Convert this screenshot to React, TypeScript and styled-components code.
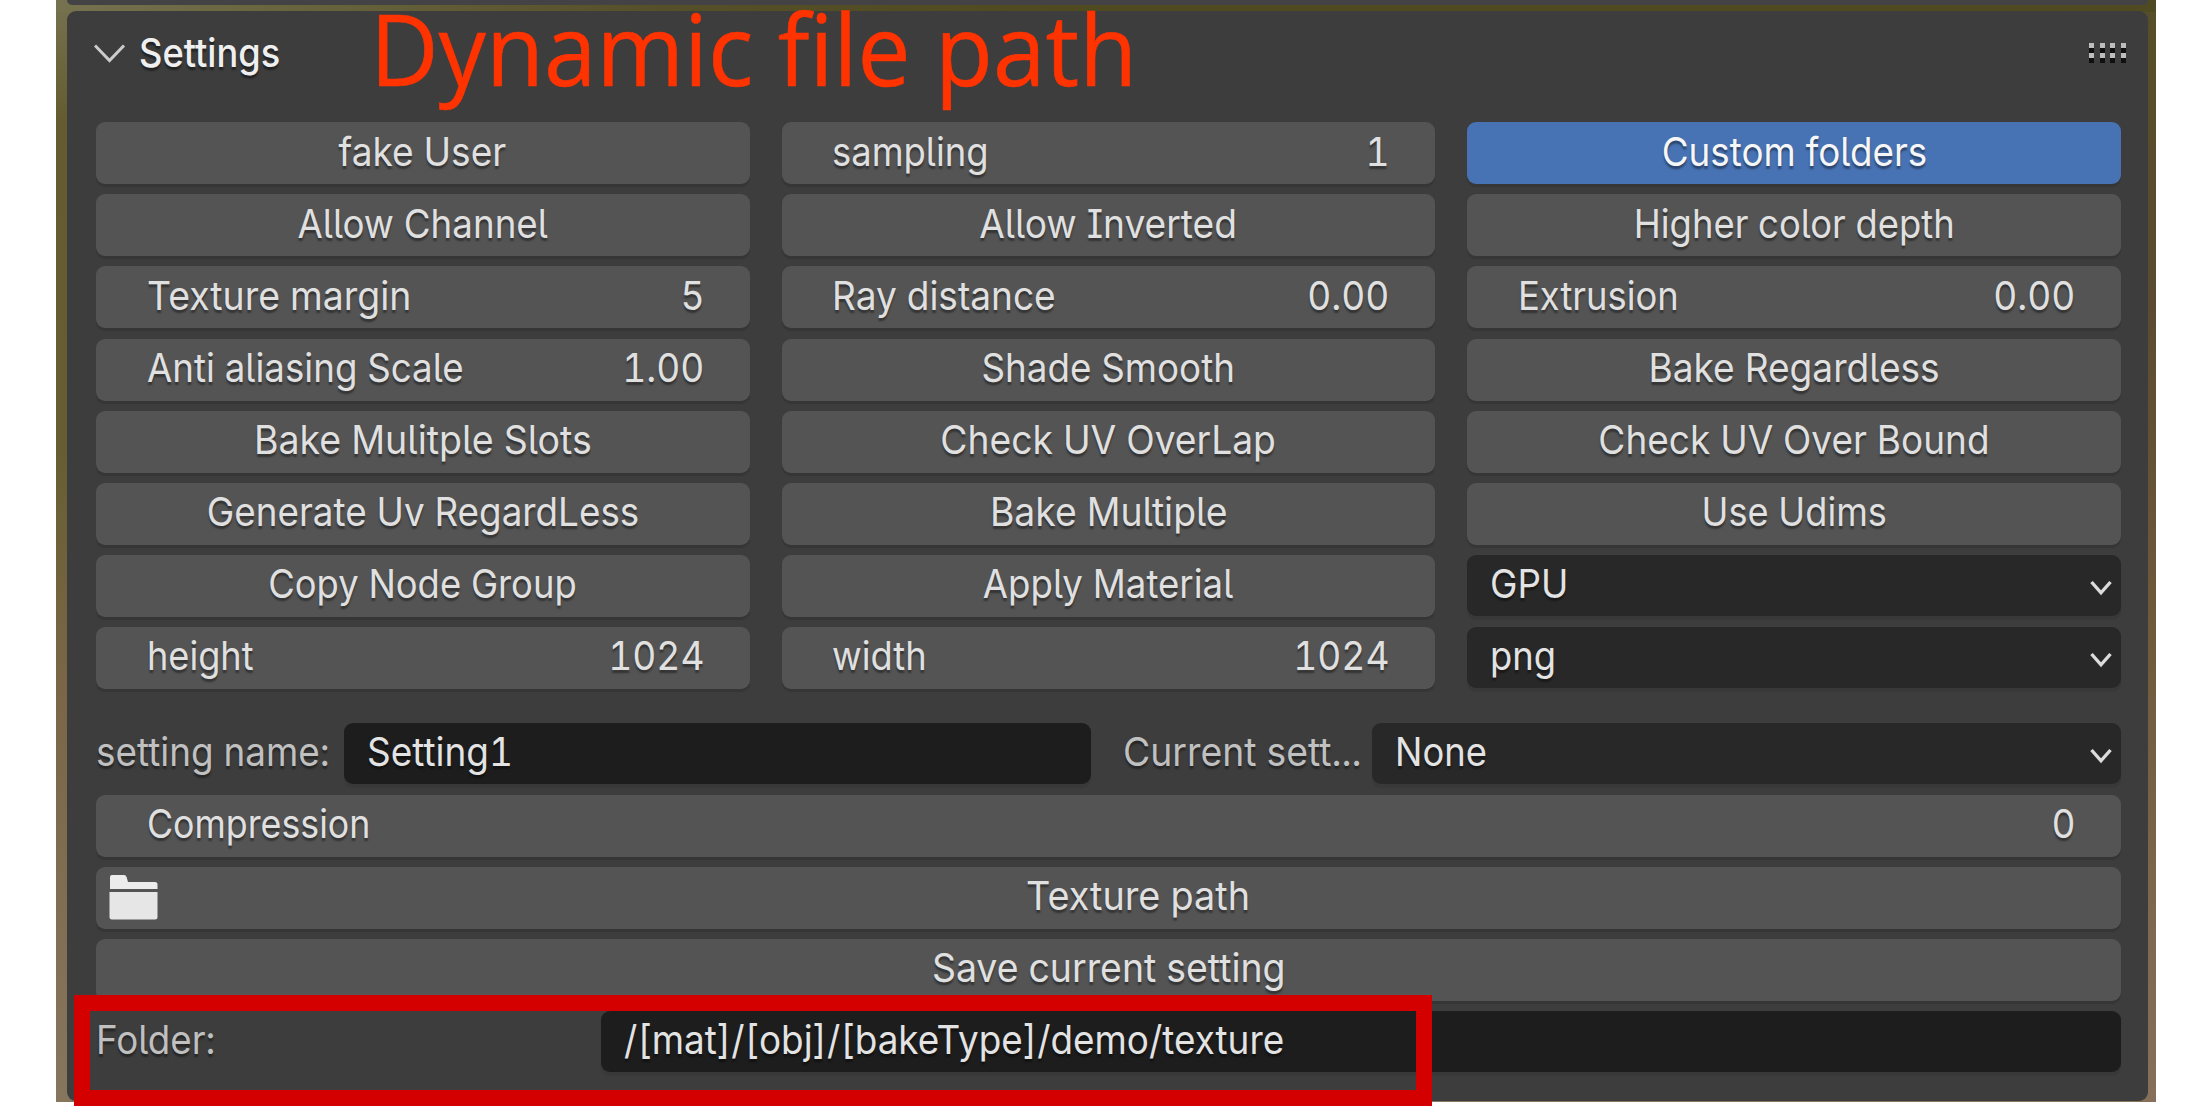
import React from "react";
import styled, { createGlobalStyle, css } from "styled-components";

const GlobalStyle = createGlobalStyle`
  * { box-sizing: border-box; }
  body {
    margin: 0;
    background: #ffffff;
    font-family: Inter, "Liberation Sans", sans-serif;
  }
`;

const Page = styled.main`
  width: 2212px;
  height: 1106px;
  overflow: hidden;
  padding: 0 56px 4px;
`;

const Frame = styled.div`
  position: relative;
  display: flex;
  flex-direction: column;
  gap: 6px;
  height: 1102px;
  padding: 0 8.5px 0 11px;
  background:
    linear-gradient(90deg, #76724f 0, #6a6640 200px, #56502a 600px, #504a20 1000px, #504a22 100%) top / 100% 12px no-repeat,
    linear-gradient(180deg, #564e28 0, #5a4b30 300px, #705a3c 640px, #86705a 1102px) right / 20px 100% no-repeat,
    linear-gradient(180deg, #76724f 0, #645c30 120px, #665e32 450px, #7a6646 680px, #86765e 1102px);
`;

const PreviousPanel = styled.div`
  flex: none;
  height: 5px;
  background: #434345;
  border-radius: 0 0 7px 7px;
`;

const Panel = styled.section`
  flex: none;
  display: flex;
  flex-direction: column;
  height: 1090px;
  padding: 0 26.5px 0 29px;
  background: #3d3d3d;
  border-radius: 9px;
`;

const Header = styled.header`
  display: flex;
  align-items: center;
  height: 111.3px;
  padding: 0 0 26px;
`;

const HeaderArrow = styled.svg`
  margin: 0 0 0 -2px;
`;

const HeaderTitle = styled.h1`
  flex: 1;
  margin: -1px 0 0 13px;
  font-size: 39.5px;
  line-height: 48px;
  font-weight: 500;
  color: #efefef;
  text-shadow: 0 3px 2px rgba(0, 0, 0, 0.45);
`;

const Grip = styled.div`
  display: grid;
  grid-template-columns: repeat(4, 5px);
  gap: 5.6px;
  margin: -6px -5px 0 0;
`;

const GripDot = styled.i`
  height: 5px;
  background: #bdbdbd;
  box-shadow: 0 5px 0 #101010;
`;

const Caption = styled.div`
  position: absolute;
  left: 313.5px;
  top: 0;
  font-family: "Open Sans", "Noto Sans", sans-serif;
  font-size: 98px;
  line-height: 97px;
  color: #ff3300;
  -webkit-text-stroke: 0.6px #ff3300;
  white-space: nowrap;
  transform-origin: 0 0;
  transform: scaleX(0.965);
`;

const Grid = styled.div`
  display: grid;
  grid-template-columns: repeat(3, 1fr);
  grid-auto-rows: 62px;
  gap: 10.1px 32px;
`;

const Stack = styled.div`
  display: flex;
  flex-direction: column;
  gap: 10px;
  margin-top: 34px;
`;

const SplitRow = styled.div`
  display: flex;
  height: 62px;
`;

const Spacer = styled.div<{ $w: number }>`
  flex: none;
  width: ${(p) => p.$w}px;
`;

const face = css`
  font-size: 39.5px;
  line-height: 48px;
  font-feature-settings: "tnum", "cv08", "cv05";
  white-space: nowrap;
  text-shadow: 0 3px 2px rgba(0, 0, 0, 0.4);
`;

const Text = styled.span<{ $fit?: number; $from?: "left" | "center" | "right" }>`
  display: inline-block;
  transform: scaleX(${(p) => p.$fit ?? 0.94});
  transform-origin: ${(p) => p.$from ?? "left"} center;
`;

const Control = styled.button<{ $active?: boolean; $icon?: boolean }>`
  ${face}
  display: flex;
  align-items: center;
  justify-content: center;
  width: 100%;
  height: 62px;
  margin: 0;
  border: 0;
  padding: 0 0 3px ${(p) => (p.$icon ? 60 : 0)}px;
  border-radius: 9px;
  font-family: inherit;
  color: ${(p) => (p.$active ? "#f6f6f6" : "#e0e0e0")};
  background: ${(p) => (p.$active ? "#4772b3" : "#545454")};
  box-shadow: 0 3px 1px #363636;
  position: relative;
`;

const NumberField = styled(Control)`
  justify-content: space-between;
  padding: 0 45.5px 3px 50.5px;
`;

const Inset = styled.div<{ $menu?: boolean; $w?: number }>`
  ${face}
  flex: ${(p) => (p.$w ? `0 0 ${p.$w}px` : "1")};
  display: flex;
  align-items: center;
  justify-content: space-between;
  height: 61px;
  padding: 0 9px 2px 23px;
  border-radius: 9px;
  color: #e3e3e3;
  background: ${(p) => (p.$menu ? "#282828" : "#1d1d1d")};
  box-shadow: 0 4px 1px #393939;
`;

const FieldLabel = styled.label<{ $w: number }>`
  ${face}
  flex: none;
  display: flex;
  align-items: center;
  width: ${(p) => p.$w}px;
  padding: 0 0 3px;
  color: #c0c0c0;
`;

const FolderGlyph = styled.svg`
  position: absolute;
  left: 13px;
  top: 8px;
`;

const Highlight = styled.div`
  position: absolute;
  left: 18px;
  top: 995px;
  width: 1358px;
  height: 111px;
  border: 16px solid #d40000;
`;

const Arrow = styled.svg`
  margin-top: 8px;
`;

const MenuArrow = () => (
  <Arrow width="22" height="18" viewBox="0 0 22 18">
    <path d="M1.500 3 L11 13.8 L20.500 3" fill="none" stroke="#dcdcdc" strokeWidth="3.4" />
  </Arrow>
);

type Item = {
  kind: "toggle" | "number" | "menu";
  label: string;
  fit: number;
  value?: string;
  active?: boolean;
};

const items: Item[] = [
  { kind: "toggle", label: "fake User", fit: 0.938 },
  { kind: "number", label: "sampling", fit: 0.922, value: "1" },
  { kind: "toggle", label: "Custom folders", fit: 0.932, active: true },
  { kind: "toggle", label: "Allow Channel", fit: 0.93 },
  { kind: "toggle", label: "Allow Inverted", fit: 0.94 },
  { kind: "toggle", label: "Higher color depth", fit: 0.921 },
  { kind: "number", label: "Texture margin", fit: 0.947, value: "5" },
  { kind: "number", label: "Ray distance", fit: 0.938, value: "0.00" },
  { kind: "number", label: "Extrusion", fit: 0.921, value: "0.00" },
  { kind: "number", label: "Anti aliasing Scale", fit: 0.929, value: "1.00" },
  { kind: "toggle", label: "Shade Smooth", fit: 0.931 },
  { kind: "toggle", label: "Bake Regardless", fit: 0.939 },
  { kind: "toggle", label: "Bake Mulitple Slots", fit: 0.95 },
  { kind: "toggle", label: "Check UV OverLap", fit: 0.942 },
  { kind: "toggle", label: "Check UV Over Bound", fit: 0.936 },
  { kind: "toggle", label: "Generate Uv RegardLess", fit: 0.932 },
  { kind: "toggle", label: "Bake Multiple", fit: 0.945 },
  { kind: "toggle", label: "Use Udims", fit: 0.915 },
  { kind: "toggle", label: "Copy Node Group", fit: 0.921 },
  { kind: "toggle", label: "Apply Material", fit: 0.927 },
  { kind: "menu", label: "GPU", fit: 0.931 },
  { kind: "number", label: "height", fit: 0.915, value: "1024" },
  { kind: "number", label: "width", fit: 0.92, value: "1024" },
  { kind: "menu", label: "png", fit: 0.92 },
];

const Cell = ({ item }: { item: Item }) => {
  if (item.kind === "number") {
    return (
      <NumberField>
        <Text $fit={item.fit}>{item.label}</Text>
        <Text $from="right">{item.value}</Text>
      </NumberField>
    );
  }
  if (item.kind === "menu") {
    return (
      <Inset $menu>
        <Text $fit={item.fit}>{item.label}</Text>
        <MenuArrow />
      </Inset>
    );
  }
  return (
    <Control $active={item.active}>
      <Text $fit={item.fit} $from="center">{item.label}</Text>
    </Control>
  );
};

export default function App() {
  return (
    <Page>
      <GlobalStyle />
      <Frame>
        <PreviousPanel />
        <Panel>
          <Header>
            <HeaderArrow width="32" height="22" viewBox="0 0 32 22">
              <path d="M1 2.500 L15.500 17.500 L30 2.500" fill="none" stroke="#cccccc" strokeWidth="3" />
            </HeaderArrow>
            <HeaderTitle>
              <Text $fit={0.917}>Settings</Text>
            </HeaderTitle>
            <Grip>
              {Array.from({ length: 8 }, (_, i) => (
                <GripDot key={i} />
              ))}
            </Grip>
          </Header>
          <Grid>
            {items.map((item) => (
              <Cell key={item.label} item={item} />
            ))}
          </Grid>
          <Stack>
            <SplitRow>
              <FieldLabel $w={248}>
                <Text $fit={0.934}>setting name:</Text>
              </FieldLabel>
              <Inset $w={747}>
                <Text $fit={0.936}>Setting1</Text>
              </Inset>
              <Spacer $w={32} />
              <FieldLabel $w={248.5}>
                <Text $fit={0.945}>Current sett...</Text>
              </FieldLabel>
              <Inset $menu>
                <Text $fit={0.92}>None</Text>
                <MenuArrow />
              </Inset>
            </SplitRow>
            <NumberField>
              <Text $fit={0.905}>Compression</Text>
              <Text $from="right">0</Text>
            </NumberField>
            <Control $icon>
              <FolderGlyph width="49" height="46" viewBox="0 0 49 46">
                <path d="M1 14 V2 Q1 0 3 0 H15 Q17 0 17.6 2 L19 7 H46 Q48.500 7 48.500 9.500 V14 Z" fill="#ececec" />
                <path d="M0.500 17 H48.500 V42 Q48.500 44.500 46 44.500 H3 Q0.500 44.500 0.500 42 Z" fill="#e6e6e6" />
              </FolderGlyph>
              <Text $fit={0.957} $from="center">Texture path</Text>
            </Control>
            <Control>
              <Text $fit={0.947} $from="center">Save current setting</Text>
            </Control>
            <SplitRow>
              <FieldLabel $w={504.5}>
                <Text $fit={0.93}>Folder:</Text>
              </FieldLabel>
              <Inset>
                <Text $fit={0.934}>/[mat]/[obj]/[bakeType]/demo/texture</Text>
              </Inset>
            </SplitRow>
          </Stack>
        </Panel>
        <Caption>Dynamic file path</Caption>
        <Highlight />
      </Frame>
    </Page>
  );
}
